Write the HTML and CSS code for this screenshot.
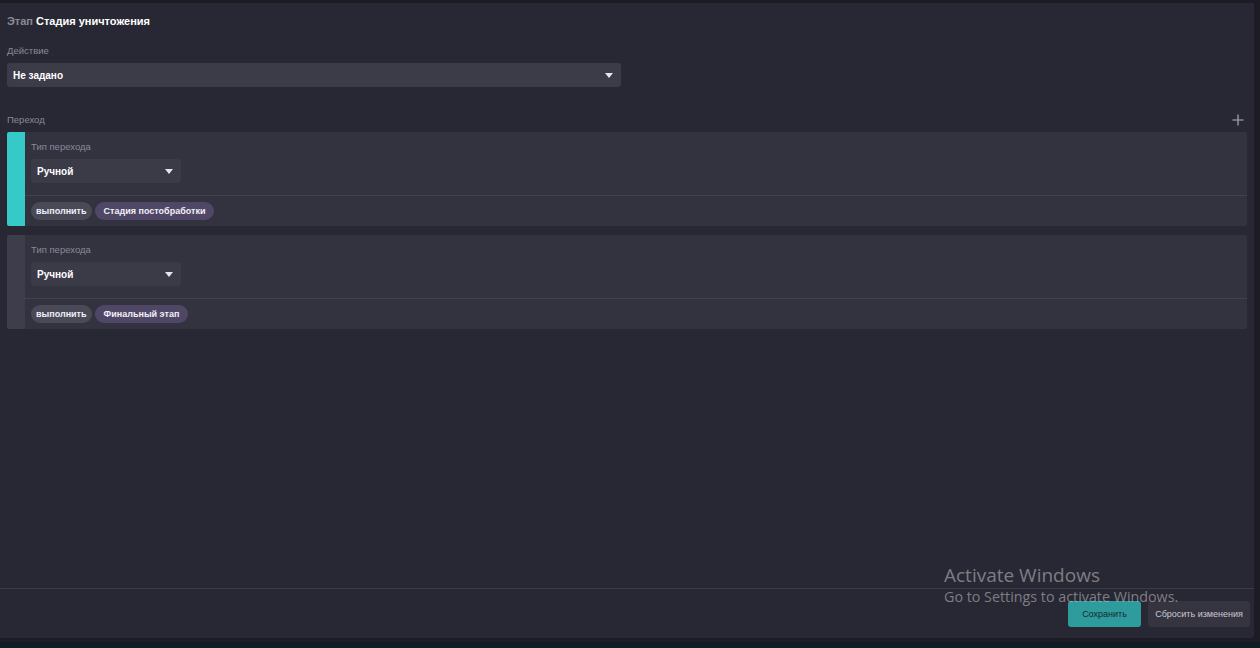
FILE: index.html
```html
<!DOCTYPE html>
<html lang="ru">
<head>
  <meta charset="UTF-8" />
  <meta name="viewport" content="width=device-width, initial-scale=1.0"/>
  <title>Этап - Стадия уничтожения</title>
  <link rel="stylesheet" href="styles.css">
</head>
<body>

<div class="app">
  <div class="panel">
    <div class="content">
      <h1 class="stage-title"><span class="muted">Этап</span> Стадия уничтожения</h1>

      <div class="field">
        <label class="field-label">Действие</label>
        <div class="select select-wide">
          <span>Не задано</span>
          <span class="caret"></span>
        </div>
      </div>

      <div class="section-head">
        <span class="field-label">Переход</span>
        <button class="add-btn" title="Добавить переход">
          <svg width="12" height="12" viewBox="0 0 12 12"><path d="M6 0.5v11M0.5 6h11" stroke="#8b8a98" stroke-width="1.6"/></svg>
        </button>
      </div>

      <div class="transition active">
        <div class="transition-bar"></div>
        <div class="transition-body">
          <div class="transition-top">
            <label class="field-label">Тип перехода</label>
            <div class="select select-small">
              <span>Ручной</span>
              <span class="caret"></span>
            </div>
          </div>
          <div class="transition-tags">
            <span class="tag">выполнить</span>
            <span class="tag tag-stage">Стадия постобработки</span>
          </div>
        </div>
      </div>

      <div class="transition">
        <div class="transition-bar"></div>
        <div class="transition-body">
          <div class="transition-top">
            <label class="field-label">Тип перехода</label>
            <div class="select select-small">
              <span>Ручной</span>
              <span class="caret"></span>
            </div>
          </div>
          <div class="transition-tags">
            <span class="tag">выполнить</span>
            <span class="tag tag-stage">Финальный этап</span>
          </div>
        </div>
      </div>
    </div>

    <div class="footer">
      <button class="btn btn-save">Сохранить</button>
      <button class="btn btn-reset">Сбросить изменения</button>
    </div>
  </div>
  <div class="bottom-strip"></div>

  <div class="activate">
    <div class="activate-title">Activate Windows</div>
    <div class="activate-sub">Go to Settings to activate Windows.</div>
  </div>
</div>

</body>
</html>
```

FILE: styles.css
```css
* {
  box-sizing: border-box;
}

body {
  margin: 0;
  background: #1d1c25;
  font-family: "Liberation Sans", Arial, sans-serif;
  font-size: 10px;
  color: #e8e8f0;
  overflow: hidden;
}

.app {
  position: relative;
  width: 1260px;
  height: 648px;
  padding-top: 3px;
}

.panel {
  width: 1254px;
  height: 635px;
  background: #282734;
  border-bottom-right-radius: 4px;
  display: flex;
  flex-direction: column;
}

.content {
  flex: 1;
  padding: 10px 7px 0 7px;
}

.stage-title {
  margin: 0 0 16px;
  font-size: 11px;
  font-weight: bold;
  color: #ffffff;
  line-height: 16px;
}

.muted {
  color: #8a8997;
}

.field-label {
  display: block;
  color: #8a8997;
  font-size: 9.5px;
  line-height: 12px;
}

.field .field-label {
  margin-bottom: 6px;
}

.select {
  display: flex;
  align-items: center;
  justify-content: space-between;
  height: 24px;
  padding: 0 8px 0 6px;
  border-radius: 3px;
  background: #3c3b48;
  font-weight: bold;
  color: #ffffff;
}

.select-wide {
  width: 614px;
}

.select-small {
  width: 150px;
  background: #3b3a47;
}

.caret {
  width: 0;
  height: 0;
  border-left: 4.5px solid transparent;
  border-right: 4.5px solid transparent;
  border-top: 5px solid #e6e6ee;
}

.section-head {
  display: flex;
  justify-content: space-between;
  align-items: center;
  margin-top: 26px;
  height: 14px;
  padding-right: 3px;
  margin-bottom: 5px;
}

.add-btn {
  border: none;
  background: none;
  padding: 0;
  width: 12px;
  height: 12px;
  cursor: pointer;
  display: flex;
}

.transition {
  display: flex;
  width: 1240px;
  height: 94px;
  margin-bottom: 9px;
  background: #33323f;
  border-radius: 2px;
  overflow: hidden;
}

.transition-bar {
  width: 18px;
  background: #3e3d4b;
}

.transition.active .transition-bar {
  background: #35cac7;
}

.transition-body {
  flex: 1;
  display: flex;
  flex-direction: column;
}

.transition-top {
  padding: 9px 0 12px 6px;
  border-bottom: 1px solid #42414e;
}

.transition-top .field-label {
  margin-bottom: 6px;
}

.transition-tags {
  display: flex;
  gap: 3px;
  padding: 6px 6px;
}

.tag {
  height: 18px;
  line-height: 18px;
  padding: 0 5px;
  border-radius: 9px;
  background: #4a4958;
  font-size: 9px;
  font-weight: bold;
  color: #f0f0f6;
}

.tag-stage {
  padding: 0 9px;
  background: #504767;
}

.footer {
  height: 50px;
  border-top: 1px solid #3c3b48;
  display: flex;
  justify-content: flex-end;
  align-items: center;
  gap: 7px;
  padding-right: 4px;
}

.btn {
  height: 26px;
  border: none;
  border-radius: 3px;
  font-family: "Liberation Sans", Arial, sans-serif;
  font-size: 9px;
  cursor: pointer;
}

.btn-save {
  width: 73px;
  background: #2e9c9d;
  color: #18272c;
}

.btn-reset {
  width: 102px;
  background: #35343f;
  color: #c9c9d8;
}

.bottom-strip {
  height: 10px;
  background: linear-gradient(#1d1c26 0 4px, #0d1b22 4px);
}

/* system watermark over the footer */
.activate {
  position: absolute;
  left: 944px;
  top: 563px;
  color: rgba(200, 200, 200, 0.55);
  font-family: "Open Sans", sans-serif;
  pointer-events: none;
}

.activate-title {
  font-size: 19px;
  line-height: 24px;
}

.activate-sub {
  font-size: 14.3px;
  line-height: 20px;
}
```
